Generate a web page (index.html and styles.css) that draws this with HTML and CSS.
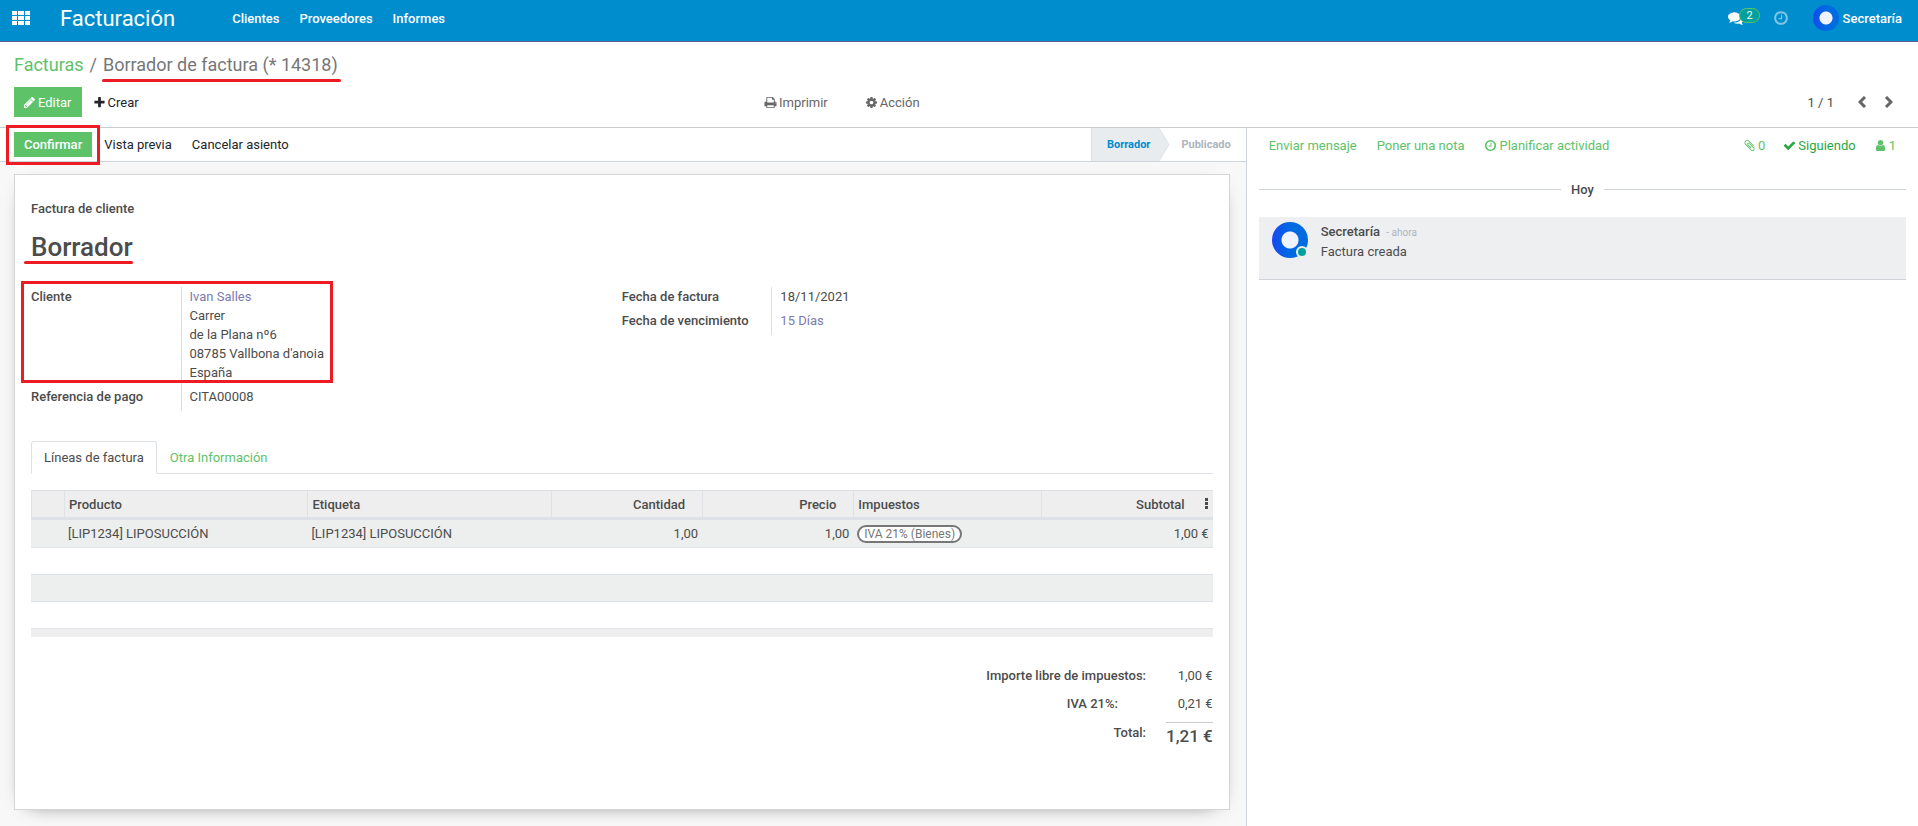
FILE: index.html
```html
<!DOCTYPE html>
<html lang="es">
<head>
    <meta charset="UTF-8">
    <meta name="viewport" content="width=device-width, initial-scale=1.0">
    <title>Borrador de factura (* 14318)</title>
    <link rel="stylesheet" href="styles.css">
</head>
<body>
    <header class="navbar">
        <button class="apps" aria-label="Aplicaciones">
            <svg width="18" height="14" viewBox="0 0 18 14"><path d="M0 0h5v4H0zM6 0h6v4H6zM13 0h5v4h-5zM0 5h5v4H0zM6 5h6v4H6zM13 5h5v4h-5zM0 10h5v4H0zM6 10h6v4H6zM13 10h5v4h-5z"/></svg>
        </button>
        <a class="brand" href="#">Facturación</a>
        <nav class="menu">
            <a href="#">Clientes</a>
            <a href="#">Proveedores</a>
            <a href="#">Informes</a>
        </nav>
        <div class="systray">
            <button class="messages" aria-label="Mensajes">
                <svg class="icon-nav" viewBox="0 0 1792 1792"><path d="M1408 768q0 139-94 257t-256.500 186.500-353.500 68.500q-86 0-176-16-124 88-278 128-36 9-86 16h-3q-11 0-20.500-8t-11.500-21q-1-3-1-6.500t.5-6.500 2-6l2.500-5 3.500-5.500 4-5 4.500-5 4-4.500q5-6 23-25t26-29.500 22.500-29 25-38.500 20.500-44q-124-72-195-177t-71-224q0-139 94-257t256.500-186.500 353.500-68.500 353.500 68.500 256.500 186.500 94 257zm384 256q0 120-71 224.500t-195 176.500q10 24 20.500 44t25 38.500 22.500 29 26 29.500 23 25q1 1 4 4.500t4.500 5 4 5 3.500 5.500l2.500 5 2 6 .5 6.500-1 6.500q-3 14-13 22t-22 7q-50-7-86-16-154-40-278-128-90 16-176 16-271 0-472-132 58 4 88 4 161 0 309-45t264-129q125-92 192-212t67-254q0-77-23-152 129 71 204 178t75 230z"/></svg>
                <span class="badge">2</span>
            </button>
            <button class="activities" aria-label="Actividades">
                <svg class="icon-nav" viewBox="0 0 1792 1792"><use href="#clock"/></svg>
            </button>
            <button class="user">
                <span class="avatar avatar-small"></span>
                Secretaría
            </button>
        </div>
    </header>

    <section class="control-panel">
        <div class="breadcrumb">
            <a href="#">Facturas</a>
            <span class="slash">/</span>
            <span class="mark-line">Borrador de factura (* 14318)</span>
        </div>
        <div class="cp-row">
            <div class="cp-left">
                <button class="btn-primary btn-edit"><svg class="icon" viewBox="0 0 1792 1792"><path d="M491 1536l91-91-235-235-91 91v107h128v128h107zm523-928q0-22-22-22-10 0-17 7l-542 542q-7 7-7 17 0 22 22 22 10 0 17-7l542-542q7-7 7-17zm-54-192l416 416-832 832h-416v-416zm683 96q0 53-37 90l-166 166-416-416 166-165q36-38 90-38 53 0 91 38l235 234q37 39 37 91z"/></svg>Editar</button>
                <button class="btn-link"><svg class="icon" viewBox="0 0 1792 1792"><path d="M1600 736v192q0 40-28 68t-68 28h-416v416q0 40-28 68t-68 28h-192q-40 0-68-28t-28-68v-416h-416q-40 0-68-28t-28-68v-192q0-40 28-68t68-28h416v-416q0-40 28-68t68-28h192q40 0 68 28t28 68v416h416q40 0 68 28t28 68z"/></svg>Crear</button>
            </div>
            <div class="cp-actions">
                <button class="btn-link"><svg class="icon" viewBox="0 0 1792 1792"><path d="M448 1536h896v-256h-896v256zm0-640h896v-384h-160q-40 0-68-28t-28-68v-160h-640v640zm1152 64q0-26-19-45t-45-19-45 19-19 45 19 45 45 19 45-19 19-45zm128 0v416q0 13-9.500 22.500t-22.500 9.500h-224v160q0 40-28 68t-68 28h-960q-40 0-68-28t-28-68v-160h-224q-13 0-22.500-9.500t-9.500-22.500v-416q0-79 56.500-135.500t135.500-56.500h64v-544q0-40 28-68t68-28h672q40 0 88 20t76 48l152 152q28 28 48 76t20 88v256h64q79 0 135.500 56.500t56.500 135.500z"/></svg>Imprimir</button>
                <button class="btn-link"><svg class="icon" viewBox="0 0 1792 1792"><path d="M1152 896q0-106-75-181t-181-75-181 75-75 181 75 181 181 75 181-75 75-181zm512-109v222q0 12-8 23t-20 13l-185 28q-19 54-39 91 35 50 107 138 10 12 10 25t-9 23q-27 37-99 108t-94 71q-12 0-26-9l-138-108q-44 23-91 38-16 136-29 186-7 28-36 28h-222q-14 0-24.500-8.500t-11.500-21.500l-28-184q-49-16-90-37l-141 107q-10 9-25 9-14 0-25-11-126-114-165-168-7-10-7-23 0-12 8-23 15-21 51-66.500t54-70.500q-27-50-41-99l-183-27q-13-2-21-12.500t-8-23.500v-222q0-12 8-23t19-13l186-28q14-46 39-92-40-57-107-138-10-12-10-24 0-10 9-23 26-36 98.500-107.500t94.500-71.500q13 0 26 10l138 107q44-23 91-38 16-136 29-186 7-28 36-28h222q14 0 24.500 8.500t11.500 21.500l28 184q49 16 90 37l142-107q9-9 24-9 13 0 25 10 129 119 165 170 7 8 7 22 0 12-8 23-15 21-51 66.500t-54 70.500q26 50 41 98l183 28q13 2 21 12.500t8 23.500z"/></svg>Acción</button>
            </div>
            <div class="pager">
                <span>1 / 1</span>
                <button aria-label="Anterior"><svg width="9" height="12" viewBox="0 0 9 12"><path d="M7 1L2 6l5 5"/></svg></button>
                <button aria-label="Siguiente"><svg width="9" height="12" viewBox="0 0 9 12"><path d="M2 1l5 5-5 5"/></svg></button>
            </div>
        </div>
    </section>

    <main class="content">
        <section class="form-view">
            <div class="statusbar">
                <div class="status-buttons">
                    <div class="mark-box mark-button"><button class="btn-primary">Confirmar</button></div>
                    <button class="btn-link">Vista previa</button>
                    <button class="btn-link">Cancelar asiento</button>
                </div>
                <div class="states">
                    <span class="state state-active">Borrador<svg class="state-arrow" width="11" height="33" viewBox="0 0 11 33"><path class="arrow-fill" d="M0 0l10 16.500L0 33z"/><path class="arrow-line" d="M0 0l10 16.500L0 33"/></svg></span>
                    <span class="state">Publicado</span>
                </div>
            </div>

            <div class="sheet">
                <div class="doc-type">Factura de cliente</div>
                <h1><span class="mark-line mark-title">Borrador</span></h1>

                <div class="groups">
                    <table class="group">
                        <tr>
                            <th scope="row">Cliente</th>
                            <td>
                                <address class="mark-box mark-client">
                                    <a href="#">Ivan Salles</a><br>
                                    Carrer<br>
                                    de la Plana nº6<br>
                                    08785 Vallbona d'anoia<br>
                                    España
                                </address>
                            </td>
                        </tr>
                        <tr>
                            <th scope="row">Referencia de pago</th>
                            <td>CITA00008</td>
                        </tr>
                    </table>
                    <table class="group">
                        <tr>
                            <th scope="row">Fecha de factura</th>
                            <td>18/11/2021</td>
                        </tr>
                        <tr>
                            <th scope="row">Fecha de vencimiento</th>
                            <td><a href="#">15 Días</a></td>
                        </tr>
                    </table>
                </div>

                <nav class="tabs">
                    <a class="tab tab-active" href="#">Líneas de factura</a>
                    <a class="tab" href="#">Otra Información</a>
                </nav>

                <table class="lines">
                    <colgroup>
                        <col class="col-handle">
                        <col class="col-text">
                        <col class="col-text">
                        <col class="col-number">
                        <col class="col-number">
                        <col class="col-taxes">
                        <col class="col-subtotal">
                    </colgroup>
                    <thead>
                        <tr>
                            <th></th>
                            <th>Producto</th>
                            <th>Etiqueta</th>
                            <th class="number">Cantidad</th>
                            <th class="number">Precio</th>
                            <th>Impuestos</th>
                            <th class="subtotal">
                                <div class="subtotal-head">
                                    Subtotal
                                    <button aria-label="Columnas opcionales"><svg width="3" height="12" viewBox="0 0 3 12"><path d="M0 0h3v3H0zM0 4h3v3H0zM0 8h3v3H0z"/></svg></button>
                                </div>
                            </th>
                        </tr>
                    </thead>
                    <tbody>
                        <tr>
                            <td></td>
                            <td>[LIP1234] LIPOSUCCIÓN</td>
                            <td>[LIP1234] LIPOSUCCIÓN</td>
                            <td class="number">1,00</td>
                            <td class="number">1,00</td>
                            <td><span class="tag">IVA 21% (Bienes)</span></td>
                            <td class="number">1,00 €</td>
                        </tr>
                        <tr><td colspan="7"></td></tr>
                        <tr><td colspan="7"></td></tr>
                        <tr><td colspan="7"></td></tr>
                    </tbody>
                    <tfoot>
                        <tr><td colspan="7"></td></tr>
                    </tfoot>
                </table>

                <table class="totals">
                    <tr>
                        <th scope="row">Importe libre de impuestos:</th>
                        <td>1,00 €</td>
                    </tr>
                    <tr class="tax">
                        <th scope="row">IVA 21%:</th>
                        <td>0,21 €</td>
                    </tr>
                    <tr class="total">
                        <th scope="row">Total:</th>
                        <td><span>1,21 €</span></td>
                    </tr>
                </table>
            </div>
        </section>

        <aside class="chatter">
            <div class="chatter-bar">
                <button>Enviar mensaje</button>
                <button>Poner una nota</button>
                <button><svg class="icon" viewBox="0 0 1792 1792"><path id="clock" d="M1024 544v448q0 14-9 23t-23 9h-320q-14 0-23-9t-9-23v-64q0-14 9-23t23-9h224v-352q0-14 9-23t23-9h64q14 0 23 9t9 23zm416 352q0-148-73-273t-198-198-273-73-273 73-198 198-73 273 73 273 198 198 273 73 273-73 198-198 73-273zm224 0q0 209-103 385.500t-279.500 279.500-385.500 103-385.500-103-279.500-279.500-103-385.500 103-385.500 279.500-279.500 385.500-103 385.500 103 279.500 279.500 103 385.500z"/></svg>Planificar actividad</button>
                <div class="chatter-right">
                    <button><svg class="icon" viewBox="0 0 1792 1792"><path d="M1596 1385q0 117-79 196t-196 79q-135 0-235-100l-777-776q-113-115-113-271 0-159 110-270t269-111q158 0 273 113l605 606q10 10 10 22 0 16-30.500 46.500t-46.500 30.500q-13 0-23-10l-606-607q-79-77-181-77-106 0-179 75t-73 181q0 105 76 181l776 777q63 63 145 63 64 0 106-42t42-106q0-82-63-145l-581-581q-26-24-60-24-29 0-48 19t-19 48q0 32 25 59l410 410q10 10 10 22 0 16-31 47t-47 31q-12 0-22-10l-410-410q-63-61-63-149 0-82 57-139t139-57q88 0 149 63l581 581q100 98 100 235z"/></svg>0</button>
                    <button class="following"><svg class="icon" viewBox="0 0 1792 1792"><path d="M1671 566q0 40-28 68l-724 724-136 136q-28 28-68 28t-68-28l-136-136-362-362q-28-28-28-68t28-68l136-136q28-28 68-28t68 28l294 295 656-657q28-28 68-28t68 28l136 136q28 28 28 68z"/></svg>Siguiendo</button>
                    <button><svg class="icon" viewBox="0 0 1792 1792"><path d="M1536 1399q0 109-62.500 187t-150.500 78h-854q-88 0-150.500-78t-62.500-187q0-85 8.500-160.500t31.500-152 58.500-131 94-89 134.500-34.500q131 128 313 128t313-128q76 0 134.500 34.500t94 89 58.500 131 31.500 152 8.500 160.500zm-256-887q0 159-112.500 271.500t-271.500 112.500-271.500-112.500-112.500-271.500 112.500-271.500 271.500-112.500 271.500 112.500 112.500 271.500z"/></svg>1</button>
                </div>
            </div>
            <div class="date-line">Hoy</div>
            <article class="message">
                <span class="avatar"><span class="online"></span></span>
                <div>
                    <div><strong>Secretaría</strong> <small>- ahora</small></div>
                    <div>Factura creada</div>
                </div>
            </article>
        </aside>
    </main>
</body>
</html>
```

FILE: styles.css
```css
* {
    box-sizing: border-box;
}
body {
    margin: 0;
    min-height: 100vh;
    display: flex;
    flex-direction: column;
    background-color: #fff;
    color: #4c4c4c;
    font-family: Roboto, sans-serif;
    font-size: 13px;
    line-height: 19px;
}
a {
    color: #7c7bad;
    text-decoration: none;
}
button {
    display: flex;
    align-items: center;
    border: 0;
    padding: 0;
    background: none;
    color: inherit;
    font: inherit;
}
svg {
    display: block;
    fill: currentColor;
}
.icon {
    width: 13px;
    height: 13px;
    margin-right: 2px;
}
.icon-nav {
    width: 16px;
    height: 16px;
}
th, strong {
    font-weight: 500;
}

/* top bar */
.navbar {
    display: flex;
    align-items: center;
    height: 42px;
    padding: 0 16px 5px 12px;
    background-color: #008dcd;
    border-bottom: 1px solid #5f5e97;
    color: #fff;
}
.navbar a {
    color: #fff;
}
.brand {
    margin-left: 30px;
    font-size: 22px;
}
.menu {
    display: flex;
    gap: 20px;
    margin-left: 57px;
    font-weight: 500;
}
.systray {
    display: flex;
    align-items: center;
    margin-left: auto;
}
.badge {
    height: 15px;
    margin: -6px 0 0 -5px;
    padding: 0 6px;
    background-color: #00a09d;
    border: 1px solid #5ec269;
    border-radius: 8px;
    font-size: 11px;
    line-height: 13px;
}
.activities {
    margin: 0 24px 0 13px;
    opacity: 0.5;
}
.user {
    gap: 4px;
    font-weight: 500;
}
.avatar {
    position: relative;
    flex: none;
    width: 36px;
    height: 36px;
    border-radius: 50%;
    background: radial-gradient(circle, #eef3fd 0 8px, transparent 9px), linear-gradient(90deg, #1848f0, #006be0 50%);
}
.avatar-small {
    width: 26px;
    height: 26px;
    background: radial-gradient(circle, #eef3fd 0 6px, transparent 7px), linear-gradient(90deg, #1848f0, #006be0 50%);
}
.online {
    position: absolute;
    right: 0;
    bottom: 0;
    width: 12px;
    height: 12px;
    border: 2px solid #edeff1;
    border-radius: 50%;
    background-color: #00a09d;
}

/* control panel */
.control-panel {
    padding: 10px 14px;
    border-bottom: 1px solid #ccc;
}
.breadcrumb {
    display: flex;
    gap: 6px;
    color: #777;
    font-size: 18px;
    line-height: 25px;
}
.breadcrumb a {
    color: #5ec269;
}
.cp-row {
    display: flex;
    align-items: center;
    margin-top: 10px;
}
.cp-left {
    display: flex;
    gap: 11px;
    width: 750px;
}
.btn-primary {
    height: 25px;
    padding: 0 10px;
    background-color: #5ec269;
    color: #fff;
    font-weight: 500;
}
.btn-edit {
    height: 30px;
    padding: 0 10px 0 9px;
    font-weight: 400;
}
.cp-left .btn-link, .status-buttons .btn-link {
    color: #212529;
}
.cp-actions {
    display: flex;
    gap: 37px;
    color: #666;
}
.pager {
    display: flex;
    align-items: center;
    gap: 17px;
    margin-left: auto;
    padding-right: 11px;
}
.pager span {
    margin-right: 7px;
}
.pager path {
    fill: none;
    stroke: #666;
    stroke-width: 3;
}

/* form */
.content {
    flex: 1;
    display: flex;
}
.form-view {
    flex: 0 0 65%;
    display: flex;
    flex-direction: column;
    border-right: 1px solid #ced4da;
    background-color: #f8f8f8;
}
.statusbar {
    display: flex;
    justify-content: space-between;
    height: 34px;
    padding-left: 14px;
    background-color: #fff;
    border-bottom: 1px solid #ced4da;
}
.status-buttons {
    display: flex;
    align-items: center;
    gap: 20px;
}
.status-buttons .mark-box {
    margin-right: -8px;
}
.states {
    display: flex;
}
.state {
    position: relative;
    display: flex;
    align-items: center;
    padding: 0 15px 0 22px;
    color: #adb5bd;
    font-size: 11px;
    font-weight: 700;
}
.state-active {
    padding: 0 9px 0 15px;
    border-left: 1px solid #dee2e6;
    background-color: #e9ecef;
    color: #008dcd;
}
.state-arrow {
    position: absolute;
    left: 100%;
    top: 0;
}
.arrow-fill {
    fill: #e9ecef;
}
.arrow-line {
    fill: none;
    stroke: #dee2e6;
}
.sheet {
    margin: 12px 16px 18px 14px;
    padding: 24px 16px 53px;
    background-color: #fff;
    border: 1px solid #d5d5d5;
    box-shadow: 0 5px 20px -15px #000;
}
.doc-type {
    font-weight: 500;
}
h1 {
    margin: 11px 0 22px;
    font-size: 26px;
    font-weight: 500;
    line-height: 36px;
}
.groups {
    display: grid;
    grid-template-columns: 1fr 1fr;
    align-items: start;
}
.group {
    border-collapse: collapse;
}
.group th {
    width: 150px;
    padding: 0 0 5px;
    text-align: left;
    vertical-align: top;
}
.group td {
    padding: 0 8px 5px;
    border-left: 1px solid #ddd;
}
address {
    width: fit-content;
    font-style: normal;
}
.tabs {
    display: flex;
    margin-top: 30px;
    border-bottom: 1px solid #dee2e6;
}
.tab {
    margin-bottom: -1px;
    padding: 6px;
    padding-inline: 12px;
    border: 1px solid transparent;
    border-radius: 3px 3px 0 0;
    color: #5ec269;
}
.tab-active {
    border-color: #dee2e6 #dee2e6 #fff;
    background-color: #fff;
    color: #4c4c4c;
}

/* invoice lines */
.lines {
    width: 100%;
    margin-top: 16px;
    border-collapse: separate;
    border-spacing: 0;
    table-layout: fixed;
}
.col-handle {
    width: 33px;
}
.col-text {
    width: 20.6%;
}
.col-number {
    width: 12.8%;
}
.col-taxes {
    width: 15.9%;
}
.lines th {
    height: 30px;
    padding: 0 4px;
    border-top: 1px solid #dee2e6;
    border-bottom: 3px solid #dee2e6;
    border-left: 1px solid #dee2e6;
    background-color: #eee;
    text-align: left;
}
.lines .number {
    text-align: right;
}
.lines th.number {
    padding-right: 17px;
}
.lines th.subtotal {
    padding-right: 5px;
}
.subtotal-head {
    display: flex;
    align-items: center;
    justify-content: flex-end;
    gap: 20px;
}
.lines td {
    height: 27px;
    padding: 0 4px;
    border-bottom: 1px solid #dee2e6;
}
.lines tbody tr:first-child td {
    height: 28px;
}
.lines tbody tr:nth-child(odd) {
    background-color: #edefee;
}
.lines tfoot td {
    height: 8px;
    border: 0;
    background-color: #eee;
}
.tag {
    display: inline-block;
    padding: 0 5px;
    border: 2px solid #777;
    border-radius: 9px;
    background-color: #fff;
    color: #777;
    font-size: 12px;
    line-height: 14px;
}
.totals {
    margin: 29px 0 0 auto;
    border-collapse: collapse;
    text-align: right;
}
.totals th {
    padding: 0 20px 9px 0;
    text-align: right;
    vertical-align: top;
}
.totals td {
    padding: 0 0 9px;
}
.totals .tax th {
    padding-right: 48px;
}
.totals .total th {
    padding-top: 1px;
}
.total span {
    display: block;
    padding-top: 2px;
    border-top: 1px solid #ccc;
    font-size: 17px;
    font-weight: 500;
    line-height: 22px;
}

/* chatter */
.chatter {
    flex: 1;
    padding: 0 12px;
}
.chatter-bar {
    display: flex;
    align-items: center;
    gap: 20px;
    height: 34px;
    padding: 0 10px;
    color: #5ec269;
}
.chatter-right {
    display: flex;
    gap: 18px;
    margin-left: auto;
}
.following {
    color: #28a745;
}
.date-line {
    display: flex;
    align-items: center;
    gap: 10px;
    margin: 18px 0;
    font-weight: 500;
}
.date-line::before, .date-line::after {
    content: "";
    flex: 1;
    border-top: 1px solid #ced4da;
}
.message {
    display: flex;
    gap: 13px;
    height: 63px;
    padding: 5px 13px;
    background-color: #edeff1;
    border-bottom: 1px solid #ced4da;
}
.message small {
    margin-left: 3px;
    color: #adb5bd;
    font-size: 10px;
}

/* red highlights */
.mark-line, .mark-box {
    position: relative;
}
.mark-line::after {
    content: "";
    position: absolute;
    left: -1px;
    right: -3px;
    bottom: -5px;
    height: 3px;
    border-radius: 2px;
    background-color: #ed1c24;
}
.mark-title::after {
    left: -7px;
    right: 0;
    bottom: -2px;
}
.mark-box::after {
    content: "";
    position: absolute;
    border: 3px solid #ed1c24;
    pointer-events: none;
}
.mark-button::after {
    inset: -7px -8px -8px;
}
.mark-client::after {
    inset: -6px -9px -1px -169px;
}
```
